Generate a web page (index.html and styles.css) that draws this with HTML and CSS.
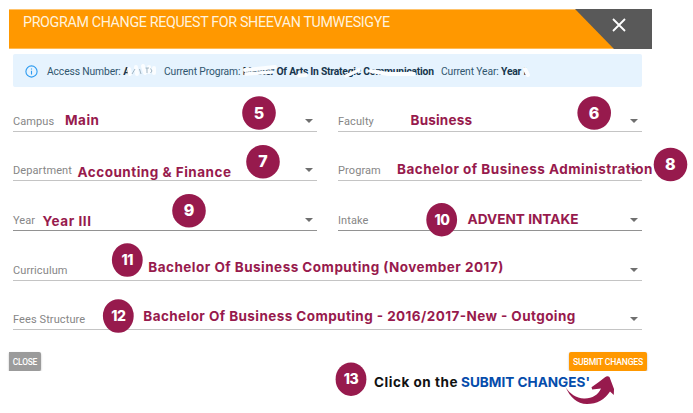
FILE: index.html
```html
<!DOCTYPE html>
<html lang="en">
<head>
    <meta charset="utf-8">
    <title>Program Change Request</title>
    <link rel="stylesheet" href="styles.css">
</head>
<body>
    <div class="dialog">
        <div class="dialog-header">
            <h1>PROGRAM CHANGE REQUEST FOR SHEEVAN TUMWESIGYE</h1>
            <button class="header-close" aria-label="Close">
                <svg width="14" height="14" viewBox="0 0 14 14"><path d="M1 1L13 13M13 1L1 13"/></svg>
            </button>
        </div>

        <div class="alert">
            <svg class="info-icon" width="13" height="13" viewBox="0 0 13 13">
                <circle cx="6.5" cy="6.5" r="5.6"/>
                <path d="M6.5 5.8V9.5M6.5 3.4V4.6"/>
            </svg>
            <span class="access">Access Number: <b>A</b></span>
            <span class="program">Current Program: <b>Master Of Arts In Strategic Communication</b></span>
            <span class="year">Current Year: <b>Year I</b></span>
        </div>

        <form class="fields">
            <div class="field"><label>Campus</label><i class="caret"></i></div>
            <div class="field"><label>Faculty</label><i class="caret"></i></div>
            <div class="field"><label>Department</label><i class="caret"></i></div>
            <div class="field"><label>Program</label><i class="caret"></i></div>
            <div class="field dark"><label>Year</label><i class="caret"></i></div>
            <div class="field dark"><label>Intake</label><i class="caret"></i></div>
            <div class="field wide"><label>Curriculum</label><i class="caret"></i></div>
            <div class="field wide"><label>Fees Structure</label><i class="caret"></i></div>
        </form>

        <div class="actions">
            <button class="btn btn-close">CLOSE</button>
            <button class="btn btn-submit">SUBMIT CHANGES</button>
        </div>
    </div>

    <!-- notes drawn over the dialog -->
    <svg class="notes" width="693" height="413" viewBox="0 0 693 413">
        <g class="smudge">
            <path d="M129 69L130 74M136 67L137 74M143 66L145 73M149 67L149 72M154 68L154 73" stroke-width="4"/>
            <path d="M245 70L256 69L275 67" stroke-width="4"/>
            <path d="M246 74L272 72" stroke-width="3.5"/>
            <path d="M299 75.5L306 75" stroke-width="4"/>
            <path d="M346 76L359 70" stroke-width="3.5"/>
            <path d="M371 71L388 74L414 74" stroke-width="4"/>
            <path d="M525 69L528 75" stroke-width="4"/>
        </g>
        <g class="access-rest">
            <path d="M132 74L135 69M139.5 69L141 74M145.5 68H149M147 68V73M150.5 68.5L152 71L150.5 73"/>
        </g>

        <g class="dot">
            <circle cx="259" cy="113" r="16.8"/>
            <circle cx="594.2" cy="113" r="16.8"/>
            <circle cx="263" cy="161.7" r="16.8"/>
            <circle cx="670.5" cy="164.5" r="16.8"/>
            <circle cx="189" cy="210.7" r="16.8"/>
            <ellipse cx="441.7" cy="219.7" rx="15.4" ry="16.8"/>
            <ellipse cx="127.3" cy="260" rx="15.4" ry="16.8"/>
            <ellipse cx="118.3" cy="316" rx="15.4" ry="16.8"/>
            <ellipse cx="351" cy="379.2" rx="15.4" ry="16.8"/>
        </g>
        <g class="num">
            <text x="259" y="118.6">5</text>
            <text x="594" y="118.6">6</text>
            <text x="263" y="166.6">7</text>
            <text x="670.3" y="169.6">8</text>
            <text x="189" y="216">9</text>
            <text x="442" y="225" class="num-2">10</text>
            <text x="127.3" y="265" class="num-2">11</text>
            <text x="118.5" y="321" class="num-2">12</text>
            <text x="351" y="384" class="num-2">13</text>
        </g>

        <g class="value">
            <text x="65" y="125" textLength="34">Main</text>
            <text x="410.5" y="125" textLength="61.5">Business</text>
            <text x="77.5" y="177" textLength="153.5">Accounting &amp; Finance</text>
            <text x="397" y="174" textLength="255.5">Bachelor of Business Administration</text>
            <text x="42.5" y="226" textLength="48.5">Year III</text>
            <text x="467.5" y="224" textLength="111" lengthAdjust="spacingAndGlyphs">ADVENT INTAKE</text>
            <text x="148.3" y="272" textLength="355">Bachelor Of Business Computing (November 2017)</text>
            <text x="143.3" y="321" textLength="432">Bachelor Of Business Computing - 2016/2017-New - Outgoing</text>
            <text x="374" y="387" textLength="83.5" class="black">Click on the</text>
            <text x="461" y="387" textLength="129" lengthAdjust="spacingAndGlyphs" class="blue">SUBMIT CHANGES'</text>
        </g>
        <path class="arrow" d="M565.5 387C570 397 577 404 587 404C597 404 605 399.5 610 391.5L613.8 395L614 389L609.5 377Q607.5 375.3 605 377.2Q599 382 591.5 387.3L592.2 389.5L601 388.5C598 395 592 398.8 584 398.5C576 398 570 394 565.5 387Z"/>
    </svg>
</body>
</html>
```
FILE: styles.css
```css
body {
    margin: 0;
    background-color: #fff;
    font-family: Roboto, Arial, sans-serif;
    overflow: hidden;
}

.dialog {
    width: 643px;
    padding: 9px 0 0 9px;
}

.dialog-header {
    display: flex;
    justify-content: space-between;
    height: 40px;
    background-color: #ff9800;
    box-shadow: inset 0 1px #ffc36b, inset 0 -1px #ffba55;
}

h1 {
    margin: 4px 0 0 14px;
    font-size: 14.3px;
    line-height: 18px;
    font-weight: 400;
    letter-spacing: -0.36px;
    color: #fff2dd;
    white-space: nowrap;
}

.header-close {
    width: 77px;
    padding: 0 0 6px 11px;
    border: none;
    background-color: #595959;
    clip-path: polygon(0 0, 100% 0, 100% 100%, 39px 100%);
}

.header-close path {
    stroke: #fff;
    stroke-width: 1.8;
}

.alert {
    display: flex;
    align-items: center;
    box-sizing: border-box;
    width: 629px;
    height: 33px;
    margin: 5px 0 0 4px;
    padding: 1px 0 0 12px;
    border-radius: 2px;
    background-color: #e6f3fe;
    color: #30566e;
    font-size: 10.3px;
    letter-spacing: -0.12px;
    white-space: nowrap;
}

.alert b {
    color: #17364d;
    letter-spacing: -0.22px;
}

.info-icon {
    margin-right: 9px;
    fill: none;
    stroke: #2d9bf0;
    stroke-width: 1.1;
}

.access {
    width: 117px;
}

.program {
    width: 277px;
}

.fields {
    display: grid;
    grid-template-columns: 304px 304px;
    column-gap: 21px;
    grid-auto-rows: 49.7px;
    margin: -5px 0 0 4px;
}

.field {
    display: flex;
    justify-content: space-between;
    align-items: flex-end;
    box-sizing: border-box;
    padding: 0 4px 2px 0;
    border-bottom: 1px solid #c4c4c4;
}

.field.dark {
    border-color: #929292;
}

.field.wide {
    grid-column: 1 / 3;
}

.field label {
    font-size: 11px;
    line-height: 15px;
    letter-spacing: 0.1px;
    color: #868686;
}

.caret {
    margin-bottom: 6px;
    border: 4px solid transparent;
    border-top-color: #6f6f6f;
    border-bottom: 0;
}

.actions {
    display: flex;
    justify-content: space-between;
    margin: 22px 5px 0 0;
}

.btn {
    height: 19px;
    padding: 0;
    border: none;
    border-radius: 2px;
    color: #fff;
    font-family: inherit;
    font-size: 8.6px;
    font-weight: 500;
    letter-spacing: -0.2px;
    box-shadow: 0 1px 2px rgba(0, 0, 0, 0.3);
}

.btn-close {
    width: 32px;
    border-radius: 0 2px 2px 0;
    background-color: #9b9b9b;
    font-size: 8.4px;
}

.btn-submit {
    width: 78px;
    background-color: #ff9800;
}

.notes {
    position: absolute;
    top: 0;
    left: 0;
    font-family: Inter, sans-serif;
}

.smudge path {
    fill: none;
    stroke: #fbfdff;
    stroke-linecap: round;
}

.access-rest path {
    fill: none;
    stroke: #8fa6b5;
    stroke-width: 0.8;
}

.dot,
.arrow {
    fill: #971a4d;
}

.num {
    fill: #fff;
    font-size: 16px;
    font-weight: 800;
    text-anchor: middle;
}

.num .num-2 {
    font-size: 14px;
    letter-spacing: -0.4px;
}

.value {
    fill: #971a4d;
    font-size: 13.5px;
    font-weight: 700;
}

.value .black {
    fill: #111;
}

.value .blue {
    fill: #054cab;
}
```
